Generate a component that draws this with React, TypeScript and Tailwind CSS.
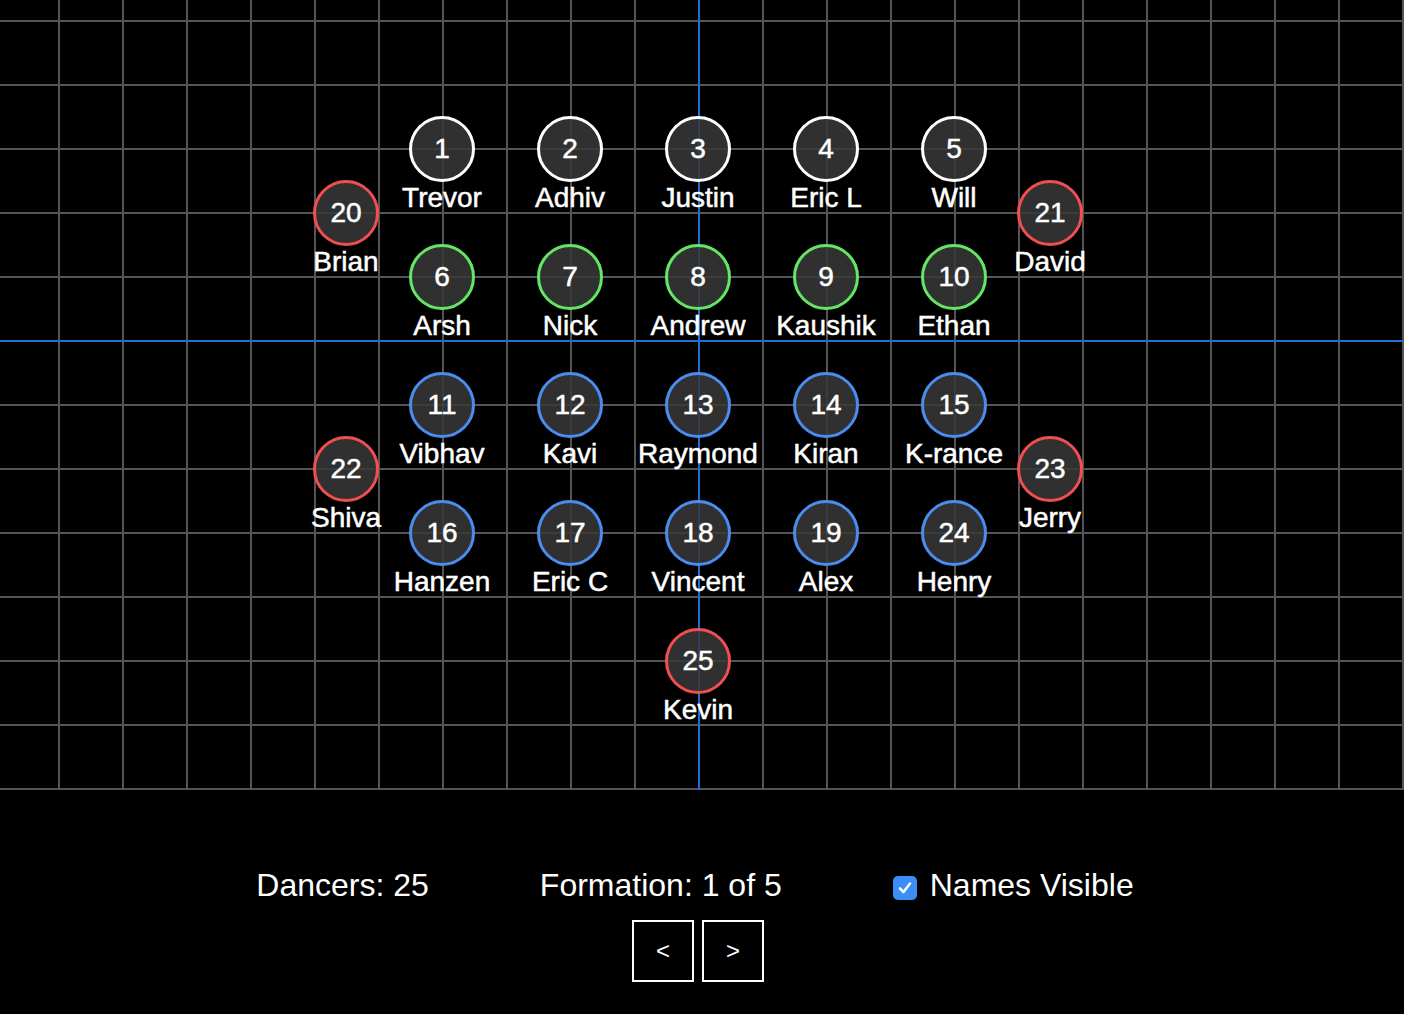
import React from "react";

type Dancer = { n: number; name: string; u: number; v: number; c: "w" | "g" | "b" | "r" };

const dancers: Dancer[] = [
  { n: 1, name: "Trevor", u: -4, v: -3, c: "w" },
  { n: 2, name: "Adhiv", u: -2, v: -3, c: "w" },
  { n: 3, name: "Justin", u: 0, v: -3, c: "w" },
  { n: 4, name: "Eric L", u: 2, v: -3, c: "w" },
  { n: 5, name: "Will", u: 4, v: -3, c: "w" },
  { n: 6, name: "Arsh", u: -4, v: -1, c: "g" },
  { n: 7, name: "Nick", u: -2, v: -1, c: "g" },
  { n: 8, name: "Andrew", u: 0, v: -1, c: "g" },
  { n: 9, name: "Kaushik", u: 2, v: -1, c: "g" },
  { n: 10, name: "Ethan", u: 4, v: -1, c: "g" },
  { n: 11, name: "Vibhav", u: -4, v: 1, c: "b" },
  { n: 12, name: "Kavi", u: -2, v: 1, c: "b" },
  { n: 13, name: "Raymond", u: 0, v: 1, c: "b" },
  { n: 14, name: "Kiran", u: 2, v: 1, c: "b" },
  { n: 15, name: "K-rance", u: 4, v: 1, c: "b" },
  { n: 16, name: "Hanzen", u: -4, v: 3, c: "b" },
  { n: 17, name: "Eric C", u: -2, v: 3, c: "b" },
  { n: 18, name: "Vincent", u: 0, v: 3, c: "b" },
  { n: 19, name: "Alex", u: 2, v: 3, c: "b" },
  { n: 24, name: "Henry", u: 4, v: 3, c: "b" },
  { n: 20, name: "Brian", u: -5.5, v: -2, c: "r" },
  { n: 21, name: "David", u: 5.5, v: -2, c: "r" },
  { n: 22, name: "Shiva", u: -5.5, v: 2, c: "r" },
  { n: 23, name: "Jerry", u: 5.5, v: 2, c: "r" },
  { n: 25, name: "Kevin", u: 0, v: 5, c: "r" },
];

const ring: Record<Dancer["c"], string> = {
  w: "border-white",
  g: "border-[#63e663]",
  b: "border-[#4b8cf0]",
  r: "border-[#f04f4f]",
};

const CX = 699;
const CY = 341;
const CELL = 64;

function Grid() {
  const v: number[] = [];
  for (let k = 0; k < 22; k++) v.push(59 + 64 * k);
  const h: number[] = [];
  for (let k = 0; k < 13; k++) h.push(21 + 64 * k);
  return (
    <svg className="absolute left-0 top-0" width={1404} height={790}>
      {v.map((x) => (
        <rect key={"v" + x} x={x - 1} y={0} width={2} height={790} fill="#555555" />
      ))}
      {h.map((y) => (
        <rect key={"h" + y} x={0} y={y - 1} width={1404} height={2} fill="#555555" />
      ))}
      <rect x={CX - 1} y={0} width={2} height={790} fill="#1f6fd8" />
      <rect x={0} y={CY - 1} width={1404} height={2} fill="#1f6fd8" />
    </svg>
  );
}

function DancerDot({ d }: { d: Dancer }) {
  const x = CX + d.u * CELL - 1;
  const y = CY + d.v * CELL;
  return (
    <div
      className="absolute flex w-[140px] flex-col items-center [-webkit-text-stroke:0.5px_white]"
      style={{ left: x - 70, top: y - 33 }}
    >
      <div
        className={`flex h-[66px] w-[66px] items-center justify-center rounded-full border-[3px] bg-[#383838]/85 text-[28px] leading-none ${ring[d.c]}`}
      >
        {d.n}
      </div>
      <div className="whitespace-nowrap text-[28px] leading-[32px]">{d.name}</div>
    </div>
  );
}

export default function App() {
  return (
    <div className="min-h-[1014px] w-full bg-black text-white font-['Liberation_Sans',Arial,sans-serif]">
      <div className="relative h-[790px] w-full overflow-hidden">
        <Grid />
        {dancers.map((d) => (
          <DancerDot key={d.n} d={d} />
        ))}
      </div>
      <div className="flex items-center justify-center gap-[111px] pr-[14px] pt-[77px] text-[32px] leading-[36px]">
        <span>Dancers: 25</span>
        <span>Formation: 1 of 5</span>
        <label className="flex items-center gap-[13px]">
          <span className="mt-[6px] flex h-[24px] w-[24px] items-center justify-center rounded-[5px] bg-[#3a8ef6]">
            <svg width="18" height="18" viewBox="0 0 18 18">
              <path d="M4 9.5 L7.5 13 L14 4.5" fill="none" stroke="white" strokeWidth="2.6" strokeLinecap="round" strokeLinejoin="round" />
            </svg>
          </span>
          <span>Names Visible</span>
        </label>
      </div>
      <div className="mt-[17px] flex justify-center gap-[8px] pr-[8px]">
        <button className="flex h-[62px] w-[62px] items-center justify-center border-2 border-white text-[24px] text-white">
          &lt;
        </button>
        <button className="flex h-[62px] w-[62px] items-center justify-center border-2 border-white text-[24px] text-white">
          &gt;
        </button>
      </div>
    </div>
  );
}
